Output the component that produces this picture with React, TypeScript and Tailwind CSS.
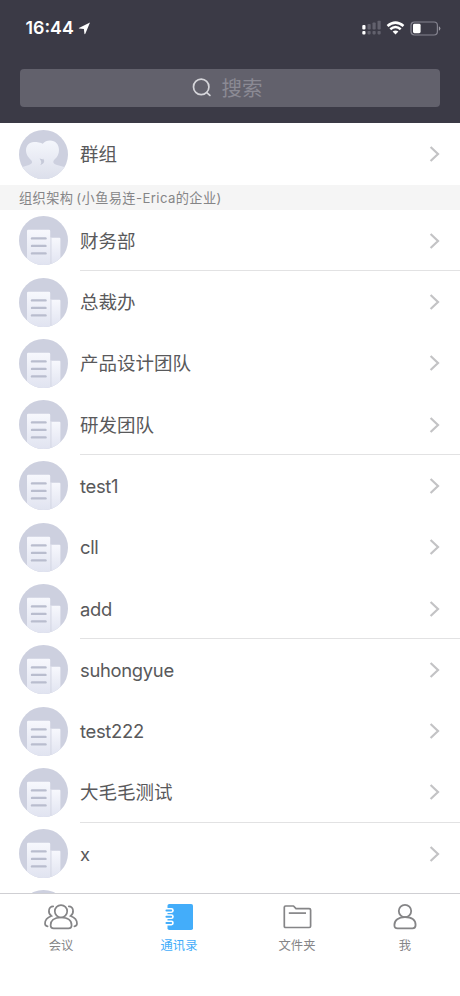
import React from 'react';

const departments = [
  '财务部',
  '总裁办',
  '产品设计团队',
  '研发团队',
  'test1',
  'cll',
  'add',
  'suhongyue',
  'test222',
  '大毛毛测试',
  'x',
];

function StatusBar() {
  return (
    <div className="flex h-[56px] items-center justify-between pl-[25.5px] pr-[19px] text-white">
      <div className="flex items-center gap-[4px]">
        <span className="text-[17.8px] leading-[24px] font-semibold">16:44</span>
        <svg width="13" height="13" viewBox="0 0 12 13" fill="white">
          <path d="M11.5 0.6 L0.4 5.9 Q0 6.3 0.6 6.6 L5.4 6.9 L5.9 11.8 Q6.3 12.6 6.8 11.8 Z" />
        </svg>
      </div>
      <div className="flex items-center">
        <svg width="19" height="16" viewBox="0 0 19 16">
          <rect x="0.3" y="5" width="3.2" height="4.5" rx="1" fill="white" />
          <rect x="0.3" y="11" width="3.2" height="3.6" rx="1" fill="white" />
          <g fill="#62616d">
            <rect x="5.5" y="4" width="3.2" height="5.5" rx="0.8" />
            <rect x="10.5" y="2.4" width="3.2" height="7.1" rx="0.8" />
            <rect x="15.5" y="0.8" width="3.2" height="8.7" rx="0.8" />
            <rect x="5.5" y="11" width="3.2" height="3.4" rx="0.8" />
            <rect x="10.5" y="11" width="3.2" height="3.4" rx="0.8" />
            <rect x="15.5" y="11" width="3.2" height="3.4" rx="0.8" />
          </g>
        </svg>
        <svg className="ml-[5px]" width="19" height="14" viewBox="0 0 19 14" fill="none" stroke="white" strokeWidth="2.6">
          <path d="M1.5 5 Q9.5 -1.8 17.5 5" />
          <path d="M4.3 8.2 Q9.5 3.8 14.7 8.2" />
          <path d="M9.5 13.4 L6.6 10.6 Q9.5 8.4 12.4 10.6 Z" fill="white" stroke="none" />
        </svg>
        <svg className="ml-[5px]" width="31" height="15" viewBox="0 0 31 15">
          <rect x="1" y="1" width="26.4" height="13" rx="3.4" fill="none" stroke="#858490" strokeWidth="1.2" />
          <rect x="3" y="2.8" width="7.6" height="9.4" rx="1.4" fill="white" />
          <path d="M28.9 5.2 Q30.4 6 30.4 7.5 T28.9 9.8 Z" fill="#9b9aa4" />
        </svg>
      </div>
    </div>
  );
}

function SearchField() {
  return (
    <div className="mx-5 mt-[13px] flex h-[38px] items-center justify-center rounded-[4px] bg-[#62616c] pr-[6px]">
      <svg width="20" height="20" viewBox="0 0 20 20" fill="none" stroke="#d5d5da" strokeWidth="1.7" strokeLinecap="round">
        <circle cx="9.2" cy="8.9" r="7.7" />
        <path d="M14.8 14.7 L17.9 17.4" />
      </svg>
      <span className="ml-[10px] pt-[1px] text-[20.5px] leading-[30px] font-normal text-[#8b8a94]">搜索</span>
    </div>
  );
}

function GroupAvatar() {
  return (
    <svg className="shrink-0" width="49" height="49" viewBox="0 0 49 49">
      <defs>
        <linearGradient id="groupFace" gradientUnits="userSpaceOnUse" x1="0" y1="11" x2="0" y2="49">
          <stop offset="0" stopColor="#f4f6fc" />
          <stop offset="1" stopColor="#dcdfeb" />
        </linearGradient>
        <clipPath id="groupClip">
          <circle cx="24.5" cy="24.5" r="24.5" />
        </clipPath>
      </defs>
      <g clipPath="url(#groupClip)">
        <rect width="49" height="49" fill="#cdd0df" />
        <path
          d="M15 12 C10 12 7 16 7 20.5 C7 25 10 28 12 30 C14 32 13 34 10 35 L0 38 V49 H30 L24 33 V14 C22 12.5 18 12 15 12 Z"
          fill="url(#groupFace)"
        />
        <path d="M20.5 28.5 C22.5 31 23 33 21 35.5 C24 35 25.5 33 24.6 29.5 Z" fill="#c6cad9" />
        <path
          d="M31 10.5 C25 10.5 21.5 15 21.5 20 C21.5 24.5 23.5 27.5 25 30 C26 33 23.5 34.5 20 35.5 L14 39 V49 H49 V38 L38 35 C34 34 33.5 31.5 35.5 29.5 C38.5 27 40 24 40 20 C40 14.5 36.5 10.5 31 10.5 Z"
          fill="url(#groupFace)"
        />
      </g>
    </svg>
  );
}

function DepartmentAvatar() {
  return (
    <svg className="shrink-0" width="49" height="49" viewBox="0 0 49 49">
      <defs>
        <linearGradient id="building" x1="0" y1="0" x2="0" y2="1">
          <stop offset="0" stopColor="#f7f8fd" />
          <stop offset="1" stopColor="#e0e3f0" />
        </linearGradient>
        <clipPath id="departmentClip">
          <circle cx="24.5" cy="24.5" r="24.5" />
        </clipPath>
      </defs>
      <g clipPath="url(#departmentClip)">
        <rect width="49" height="49" fill="#cdd0df" />
        <rect x="29" y="21.8" width="12.4" height="28" rx="1" fill="url(#building)" />
        <rect x="31" y="22" width="1.6" height="27" fill="#d3d6e3" opacity="0.7" />
        <rect x="8" y="13.7" width="23.2" height="36" rx="1.2" fill="url(#building)" />
        <g stroke="#b9bdce" strokeWidth="2.4" strokeLinecap="round">
          <path d="M13 22.4 H26.5" />
          <path d="M13 29.9 H26.5" />
          <path d="M13 37.4 H26.5" />
        </g>
      </g>
    </svg>
  );
}

function Row({ label, avatar, divider = false }: { label: string; avatar: React.ReactNode; divider?: boolean }) {
  const latin = /^[a-z0-9]+$/.test(label);
  return (
    <div className="flex h-[61.3px] shrink-0 items-center pl-[19px]">
      {avatar}
      <div
        className={`ml-3 flex h-full flex-1 items-center justify-between border-b pt-[1px] pr-[20px] ${
          divider ? 'border-[#e2e2e3]' : 'border-transparent'
        }`}
      >
        <span
          className={`leading-[28px] text-[#59595b] ${latin ? 'text-[18.4px] tracking-[-0.3px]' : 'text-[18.5px]'}`}
        >
          {label}
        </span>
        <svg width="11" height="16" viewBox="0 0 11 16" fill="none" stroke="#c3c3c5" strokeWidth="2.2">
          <path d="M1.6 1 L9 8 L1.6 15" />
        </svg>
      </div>
    </div>
  );
}

const gray = '#858587';

function MeetingIcon() {
  return (
    <svg width="34" height="28" viewBox="0 0 34 28" fill="none" stroke={gray} strokeWidth="1.7" strokeLinecap="round">
      <circle cx="17" cy="8.3" r="6.2" />
      <path d="M6.6 22.3 C6.6 17 10.5 14.5 17 14.5 C23.5 14.5 27.6 17 27.6 22.3 C27.6 24.6 26.6 25.4 24.6 25.4 H9.6 C7.6 25.4 6.6 24.6 6.6 22.3 Z" />
      <path d="M9.2 3.4 C4.4 3.6 3.4 9.8 7.4 13 C3 14.6 1 17.4 1 20.5 C1 22.3 2 23.1 3.6 23.3" />
      <path d="M24.8 3.4 C29.6 3.6 30.6 9.8 26.6 13 C31 14.6 33 17.4 33 20.5 C33 22.3 32 23.1 30.4 23.3" />
    </svg>
  );
}

function ContactsIcon() {
  return (
    <svg width="29" height="28" viewBox="0 0 29 28">
      <rect x="2.5" y="1" width="25.5" height="26" rx="1.8" fill="#43adfa" />
      <g fill="none" strokeLinecap="round">
        {[7.5, 13.7, 20].map((y) => (
          <g key={y}>
            <path d={`M0.5 ${y} H6.4`} stroke="white" strokeWidth="4.8" />
            <path d={`M1.4 ${y} H6.2`} stroke="#43adfa" strokeWidth="1.9" />
          </g>
        ))}
      </g>
    </svg>
  );
}

function FolderIcon() {
  return (
    <svg width="29" height="28" viewBox="0 0 29 28" fill="none" stroke={gray} strokeWidth="1.7" strokeLinejoin="round">
      <path d="M1.3 4.3 Q1.3 3 2.6 3 H10.5 L13 5.7 H26.2 Q27.6 5.7 27.6 7 V23.2 Q27.6 24.5 26.2 24.5 H2.6 Q1.3 24.5 1.3 23.2 Z" />
      <path d="M5.8 10.1 H23" />
    </svg>
  );
}

function MeIcon() {
  return (
    <svg width="24" height="28" viewBox="0 0 24 28" fill="none" stroke={gray} strokeWidth="1.8">
      <circle cx="12" cy="8" r="6.2" />
      <path d="M1.4 22 C1.4 17 5.5 14.2 12 14.2 C18.5 14.2 22.6 17 22.6 22 C22.6 24.5 21.6 25.3 19.5 25.3 H4.5 C2.4 25.3 1.4 24.5 1.4 22 Z" />
    </svg>
  );
}

const tabs = [
  { label: '会议', icon: <MeetingIcon />, width: 'w-[122px]', color: 'text-[#858587]' },
  { label: '通讯录', icon: <ContactsIcon />, width: 'w-[114px]', color: 'text-[#43adfa]' },
  { label: '文件夹', icon: <FolderIcon />, width: 'w-[122px]', color: 'text-[#858587]' },
  { label: '我', icon: <MeIcon />, width: 'w-[94px]', color: 'text-[#858587]' },
];

export default function App() {
  return (
    <div className="flex h-[996px] w-[460px] flex-col overflow-hidden bg-white font-['Inter','Noto_Sans_CJK_SC',sans-serif]">
      <header className="h-[123.4px] shrink-0 bg-[#3b3a46]">
        <StatusBar />
        <SearchField />
      </header>
      <main className="flex min-h-0 flex-1 flex-col overflow-hidden">
        <Row label="群组" avatar={<GroupAvatar />} />
        <div className="flex h-[25.4px] shrink-0 items-center bg-[#f5f5f5] pt-[1px] pl-[19px] text-[13.2px] leading-[20px] tracking-[0.4px] text-[#858587]">
          <span>组织架构</span>
          <span className="ml-[3px]">(小鱼易连-Erica的企业)</span>
        </div>
        {departments.map((name, i) => (
          <Row key={name} label={name} avatar={<DepartmentAvatar />} divider={i % 3 === 0 && i < 10} />
        ))}
        <Row label="" avatar={<DepartmentAvatar />} />
      </main>
      <nav className="flex h-[103px] shrink-0 border-t border-[#cfcfd3] bg-white pt-[9px]">
        {tabs.map((tab) => (
          <div key={tab.label} className={`flex flex-col items-center ${tab.width} ${tab.color}`}>
            {tab.icon}
            <span className="mt-[6px] text-[12.3px] leading-[18px]">{tab.label}</span>
          </div>
        ))}
      </nav>
    </div>
  );
}
